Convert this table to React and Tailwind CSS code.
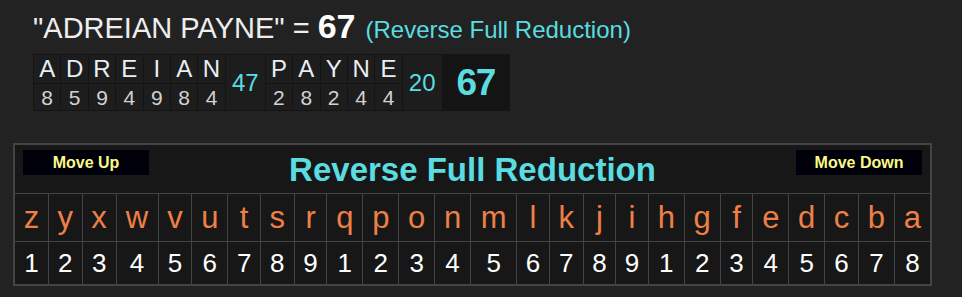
import React from 'react';

const words = [
    { letters: [['A', 8], ['D', 5], ['R', 9], ['E', 4], ['I', 9], ['A', 8], ['N', 4]], sum: 47 },
    { letters: [['P', 2], ['A', 8], ['Y', 2], ['N', 4], ['E', 4]], sum: 20 },
];

const alphabet = 'zyxwvutsrqponmlkjihgfedcba'.split('');
const values = [1, 2, 3, 4, 5, 6, 7, 8, 9, 1, 2, 3, 4, 5, 6, 7, 8, 9, 1, 2, 3, 4, 5, 6, 7, 8];

const App = () => {
    return (
        <div className="w-[962px] h-[297px] bg-[#222222] overflow-hidden font-['Liberation_Sans',Arial,sans-serif]">
            {/* Title */}
            <div className="flex items-baseline pl-[33px] pt-[9px] leading-none">
                <span className="whitespace-pre text-[29px] text-[#eeeeee]">"ADREIAN PAYNE" = </span>
                <span className="text-[34px] font-bold text-white">67</span>
                <span className="ml-[10px] text-[24px] text-[#5adce0]">(Reverse Full Reduction)</span>
            </div>

            {/* Letter breakdown */}
            <div className="ml-[33px] mt-[11px] flex w-fit border border-[#141414] bg-[#1d1d1d]">
                {words.map((word, wi) => (
                    <React.Fragment key={wi}>
                        {word.letters.map(([ch, val], i) => (
                            <div key={i} className="flex w-[27.4px] flex-col border-r border-[#141414]">
                                <div className="flex h-[29px] items-center justify-center border-b border-[#141414] text-[24px] leading-none text-[#e8eef4]">{ch}</div>
                                <div className="flex h-[26px] items-center justify-center text-[21px] leading-none text-[#d2d2d2]">{val}</div>
                            </div>
                        ))}
                        <div className="flex w-[40px] items-center justify-center border-r border-[#141414] text-[24px] leading-none text-[#5adce0]">
                            {word.sum}
                        </div>
                    </React.Fragment>
                ))}
                <div className="flex w-[66px] items-center justify-center bg-[#141414] text-[37px] font-bold leading-none tracking-[-1.5px] text-[#5adce0]">
                    67
                </div>
            </div>

            {/* Cipher chart */}
            <div className="ml-[13px] mt-[32px] w-[919px] border border-[#444444] bg-[#171717]">
                <table className="w-full border-collapse">
                    <thead>
                        <tr>
                            <th colSpan={26} className="border border-[#444444] p-0">
                                <div className="grid h-[48px] grid-cols-[1fr_auto_1fr] px-[8px] pt-[5px]">
                                    <button className="h-[25px] w-[126px] self-start justify-self-start bg-[#00000a] text-[16px] font-bold text-[#fafa88]">
                                        Move Up
                                    </button>
                                    <h2 className="-mt-[5px] self-center text-[33px] font-bold leading-none text-[#5adce0]">
                                        Reverse Full Reduction
                                    </h2>
                                    <button className="h-[25px] w-[126px] self-start justify-self-end bg-[#00000a] text-[16px] font-bold text-[#fafa88]">
                                        Move Down
                                    </button>
                                </div>
                            </th>
                        </tr>
                    </thead>
                    <tbody>
                        <tr>
                            {alphabet.map((ch, i) => (
                                <td key={i} className="border border-[#444444] px-[6px] py-[6px] text-center text-[31px] leading-[35px] text-[#ee8047]">
                                    {ch}
                                </td>
                            ))}
                        </tr>
                        <tr>
                            {values.map((v, i) => (
                                <td key={i} className="border border-[#444444] px-[6px] py-[6px] text-center text-[26px] leading-[30px] text-white">
                                    {v}
                                </td>
                            ))}
                        </tr>
                    </tbody>
                </table>
            </div>
        </div>
    );
};

export default App;
